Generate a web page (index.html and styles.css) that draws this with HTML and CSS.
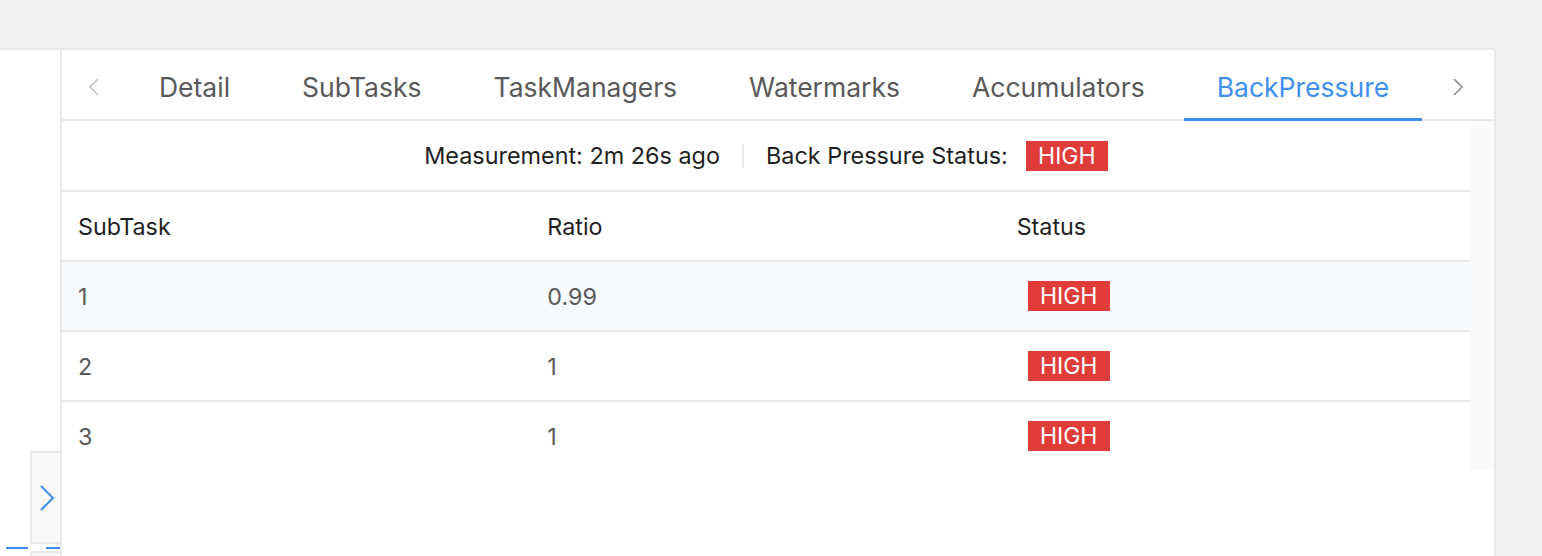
FILE: index.html
```html
<!DOCTYPE html>
<html>
<head>
<meta charset="utf-8">
<link rel="stylesheet" href="styles.css">
</head>
<body>
<div class="frame">
  <aside class="side">
    <div class="collapse">
      <svg width="16" height="26" viewBox="0 0 16 26"><polyline points="2,1 14,13 2,25" fill="none" stroke="#3d8ff0" stroke-width="2"/></svg>
    </div>
    <div class="lines"><span class="l1"></span><span class="l2"></span></div>
    <div class="collapse next"></div>
  </aside>
  <main class="panel">
    <nav class="tabs">
      <div class="arrow prev">
        <svg width="14" height="18" viewBox="0 0 14 18"><polyline points="11,1 3,9 11,17" fill="none" stroke="#c4c4c4" stroke-width="1.6"/></svg>
      </div>
      <div class="tablist">
        <div class="tab">Detail</div>
        <div class="tab">SubTasks</div>
        <div class="tab">TaskManagers</div>
        <div class="tab">Watermarks</div>
        <div class="tab">Accumulators</div>
        <div class="tab active">BackPressure</div>
      </div>
      <div class="arrow next">
        <svg width="14" height="18" viewBox="0 0 14 18"><polyline points="3,1 11,9 3,17" fill="none" stroke="#8c8c8c" stroke-width="1.6"/></svg>
      </div>
    </nav>
    <div class="content">
      <div class="scroll">
        <div class="measure">
          <span>Measurement: 2m 26s ago</span>
          <span class="divider"></span>
          <span>Back Pressure Status:</span>
          <span class="badge">HIGH</span>
        </div>
        <table class="grid">
          <thead>
            <tr><th>SubTask</th><th>Ratio</th><th>Status</th></tr>
          </thead>
          <tbody>
            <tr class="hover"><td>1</td><td>0.99</td><td><span class="badge cell">HIGH</span></td></tr>
            <tr><td>2</td><td>1</td><td><span class="badge cell">HIGH</span></td></tr>
            <tr class="last"><td>3</td><td>1</td><td><span class="badge cell">HIGH</span></td></tr>
          </tbody>
        </table>
      </div>
      <div class="track"></div>
    </div>
  </main>
</div>
</body>
</html>
```
FILE: styles.css
```css
html, body {
  margin: 0;
  padding: 0;
  height: 100%;
  overflow: hidden;
  background: #f2f2f2;
  font-family: Inter, "Noto Sans", "Liberation Sans", sans-serif;
}
.frame {
  margin-top: 48px;
  width: 1496px;
  height: 600px;
  background: #fff;
  border-top: 2px solid #e8e8e8;
  border-right: 2px solid #e8e8e8;
  border-top-right-radius: 4px;
  display: flex;
  box-sizing: border-box;
}
.side {
  width: 62px;
  flex: none;
  border-right: 2px solid #e8e8e8;
  box-sizing: border-box;
  display: flex;
  flex-direction: column;
}
.collapse {
  margin-top: 401px;
  margin-left: 30px;
  height: 93px;
  box-sizing: border-box;
  border: 2px solid #e8e8e8;
  border-right: none;
  background: #f8f8f8;
  display: flex;
  align-items: center;
  justify-content: center;
  padding-left: 2px;
}
.collapse.next {
  margin-top: 0;
  height: 20px;
}
.lines {
  height: 7px;
  display: flex;
  align-items: center;
}
.lines span {
  display: block;
  height: 2px;
  background: #3d8ff0;
}
.l1 { margin-left: 6px; width: 22px; }
.l2 { margin-left: 18px; width: 14px; }
.panel {
  flex: 1;
  display: flex;
  flex-direction: column;
  min-width: 0;
}
.tabs {
  height: 71px;
  box-sizing: border-box;
  border-bottom: 2px solid #e8e8e8;
  display: flex;
  align-items: stretch;
}
.arrow {
  display: flex;
  align-items: center;
  justify-content: center;
  padding-top: 4px;
}
.arrow.prev { width: 64px; }
.arrow.next { flex: 1; }
.tablist {
  display: flex;
  gap: 6px;
}
.tab {
  padding: 6px 33px 0;
  font-size: 26.5px;
  color: #595959;
  display: flex;
  align-items: center;
  margin-bottom: -2px;
  border-bottom: 3px solid transparent;
}
.tab.active {
  color: #3d8ff0;
  border-bottom-color: #3d8ff0;
}
.content {
  display: flex;
  align-items: flex-start;
}
.scroll {
  flex: 1;
}
.track {
  width: 24px;
  height: 349px;
  background: #fafafa;
}
.measure {
  height: 71px;
  box-sizing: border-box;
  border-bottom: 2px solid #e8e8e8;
  display: flex;
  align-items: center;
  justify-content: center;
  font-size: 23.4px;
  color: #1f1f1f;
}
.divider {
  width: 2px;
  height: 24px;
  background: #e8e8e8;
  margin: 0 22px;
}
.badge {
  display: inline-block;
  background: #e03c3a;
  color: #fff;
  font-size: 23px;
  width: 82px;
  height: 30px;
  line-height: 30px;
  text-align: center;
  margin-left: 18px;
}
.grid {
  width: 100%;
  border-collapse: collapse;
  table-layout: fixed;
  font-size: 23.3px;
}
.grid th, .grid td {
  height: 68px;
  padding: 0 0 0 16px;
  text-align: left;
  border-bottom: 2px solid #e8e8e8;
}
.grid th {
  font-weight: 400;
  color: #1f1f1f;
}
.grid td {
  color: #595959;
}
.grid tr.hover td { background: #f7fbfe; }
.grid tr.last td { border-bottom: none; }
.badge.cell { margin-left: 11px; }
```
